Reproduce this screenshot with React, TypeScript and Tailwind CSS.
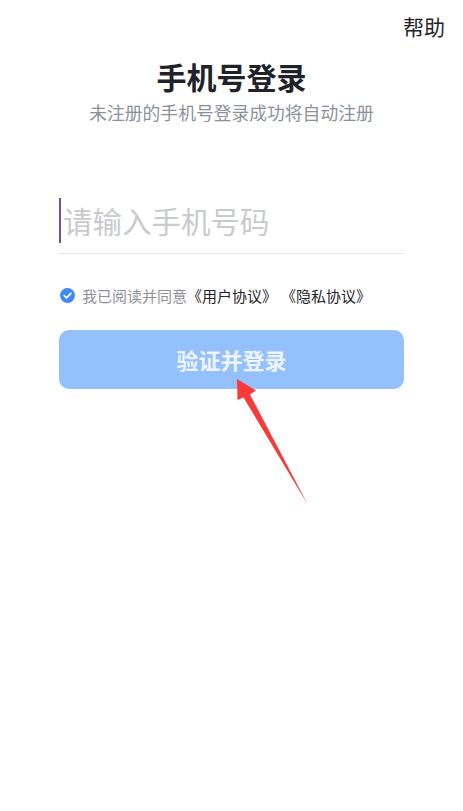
export default function App() {
  return (
    <div
      className="relative w-[463px] h-[811px] bg-white overflow-hidden"
      style={{ fontFamily: '"Noto Sans CJK SC", "Noto Sans", sans-serif' }}
    >
      {/* 顶部 */}
      <div className="flex justify-end pr-[18px] pt-[16px]">
        <span className="text-[21px] leading-none text-[#1f2329]">帮助</span>
      </div>

      {/* 标题 */}
      <div className="flex flex-col items-center mt-[24px]">
        <h1 className="text-[30px] leading-none font-bold text-[#1f2329]">手机号登录</h1>
        <p className="mt-[13px] text-[17.8px] leading-none text-[#8c9099]">未注册的手机号登录成功将自动注册</p>
      </div>

      {/* 表单 */}
      <div className="px-[59px] mt-[76px]">
        <div className="flex items-center h-[46px] border-b border-[#e6e6e6] pb-[9px] box-content">
          <span className="w-[2px] h-[45px] bg-[#6d52a3]" />
          <span className="ml-[2px] text-[29.5px] leading-none text-[#c9cacd]">请输入手机号码</span>
        </div>

        <div className="flex items-center mt-[34px] text-[15px] leading-none [text-spacing-trim:space-all]">
          <svg width="15" height="15" viewBox="0 0 16 16" className="ml-[1px] mr-[7px]">
            <circle cx="8" cy="8" r="8" fill="#3d8af7" />
            <path d="M4.5 8.2 L7 10.6 L11.6 5.8" stroke="#fff" strokeWidth="1.9" fill="none" strokeLinecap="round" strokeLinejoin="round" />
          </svg>
          <span className="text-[#8c9099]">我已阅读并同意</span>
          <span className="text-[#1f2329]">《用户协议》</span>
          <span className="ml-[4px] text-[#1f2329]">《隐私协议》</span>
        </div>

        <button className="mt-[27px] w-full h-[59px] rounded-[10px] bg-[#94c0fc] text-[22px] font-bold text-[#eef5ff]">
          验证并登录
        </button>
      </div>

      {/* 红色箭头标注 */}
      <svg className="absolute left-0 top-0 pointer-events-none" width="463" height="811">
        <polygon points="237,379 256,390.5 250,394.5 308,505 243.5,397.5 237.5,400" fill="#f83a3a" />
      </svg>
    </div>
  );
}
